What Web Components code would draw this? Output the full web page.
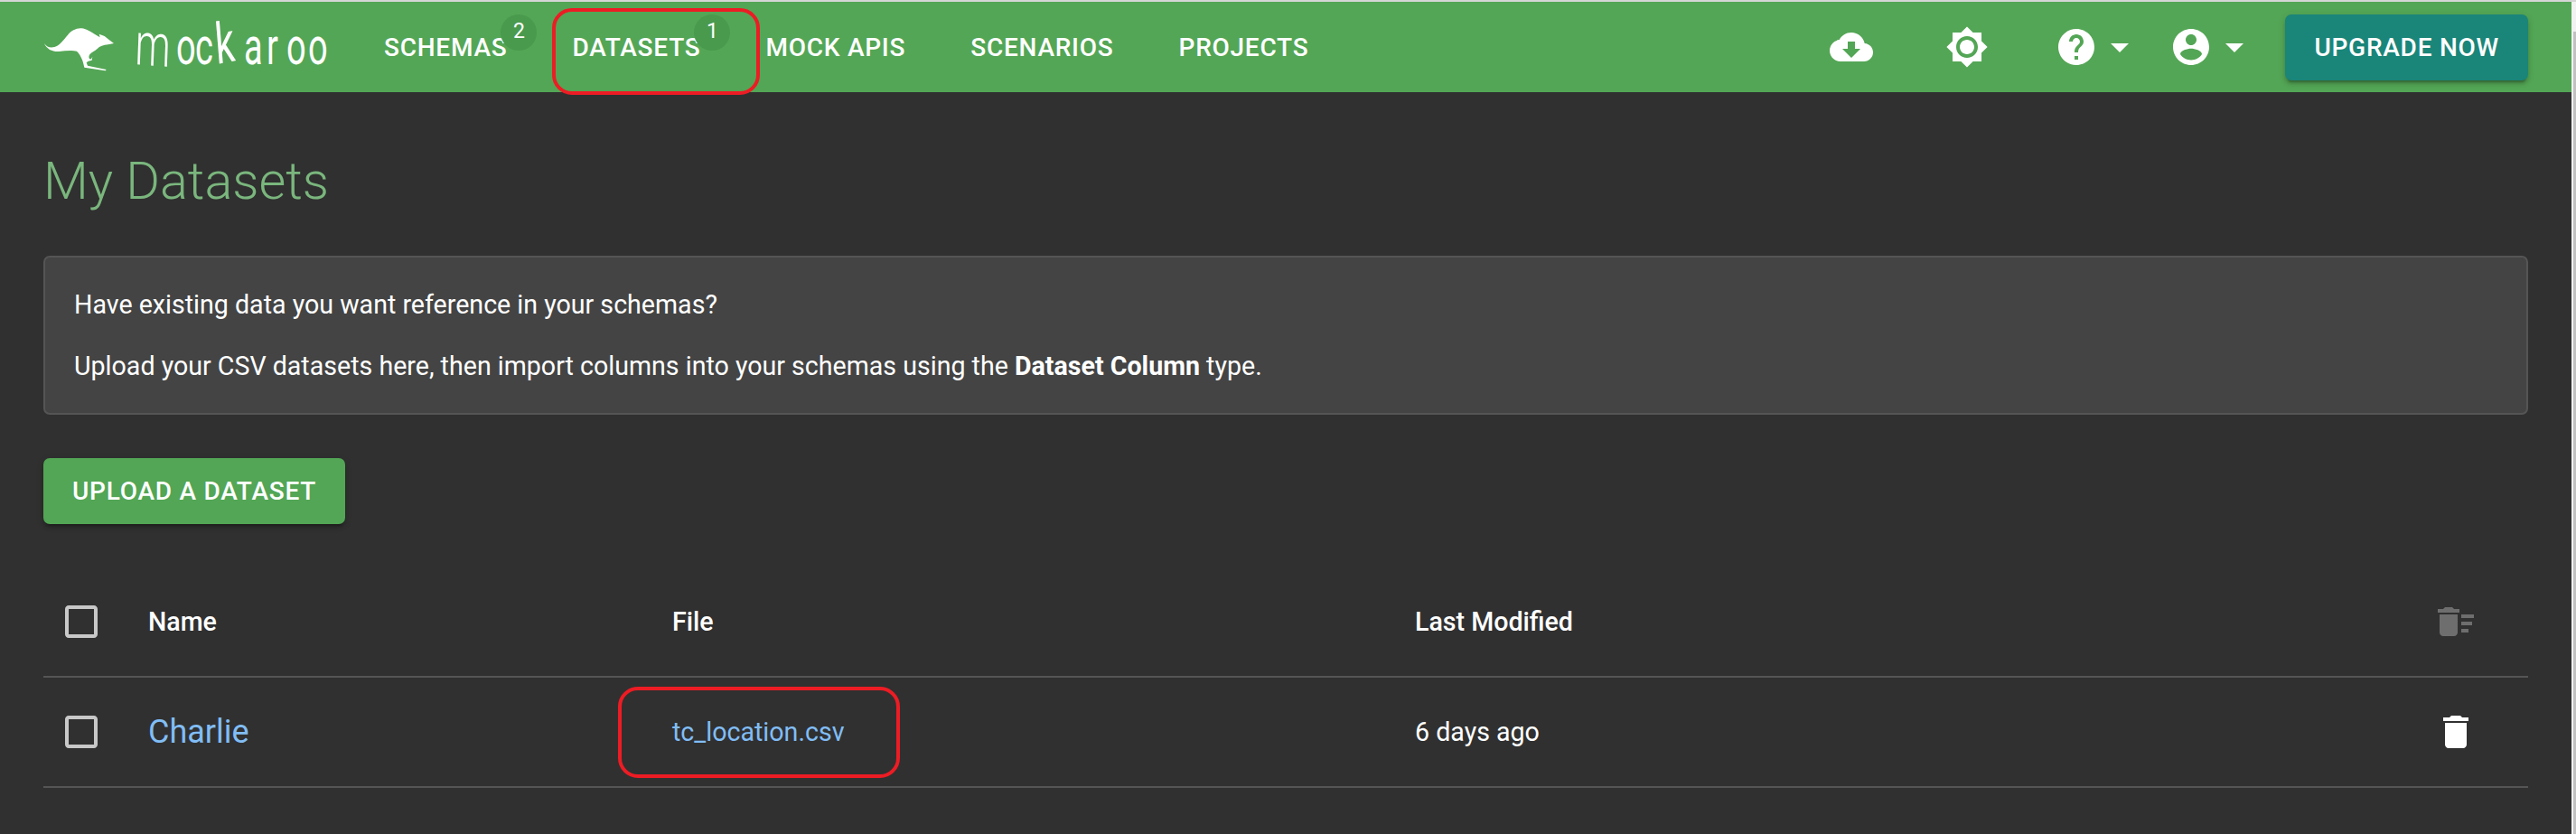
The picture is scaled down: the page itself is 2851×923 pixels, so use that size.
<!DOCTYPE html>
<html lang="en">
<head>
<meta charset="utf-8">
<title>My Datasets</title>
<style>
  html, body { margin: 0; height: 100%; background: #303030; overflow: hidden; }
  body { font: 400 28.6px/36px Roboto, "Liberation Sans", sans-serif; color: #fff; }
</style>
</head>
<body>
<mk-app>
  <mk-navbar slot="nav">
    <mk-nav-link badge="2">SCHEMAS</mk-nav-link>
    <mk-callout style="--l:-22px;--t:-26px;--w:230px;--h:96px"><mk-nav-link badge="1">DATASETS</mk-nav-link></mk-callout>
    <mk-nav-link>MOCK APIS</mk-nav-link>
    <mk-nav-link>SCENARIOS</mk-nav-link>
    <mk-nav-link>PROJECTS</mk-nav-link>
    <mk-icon slot="tools" name="cloud" style="margin-right:80px"></mk-icon>
    <mk-icon slot="tools" name="sun" style="margin-right:73px"></mk-icon>
    <mk-icon slot="tools" name="help"></mk-icon>
    <mk-icon slot="tools" name="caret" style="margin-right:31px"></mk-icon>
    <mk-icon slot="tools" name="account"></mk-icon>
    <mk-icon slot="tools" name="caret" style="margin-right:32px"></mk-icon>
    <mk-button slot="tools" color="#1a8579">UPGRADE NOW</mk-button>
  </mk-navbar>

  <mk-title>My Datasets</mk-title>

  <mk-notice>
    <p>Have existing data you want reference in your schemas?</p>
    <p>Upload your CSV datasets here, then import columns into your schemas using the <b>Dataset Column</b> type.</p>
  </mk-notice>

  <mk-button color="#52a655" style="margin-top:48px">UPLOAD A DATASET</mk-button>

  <mk-table>
    <mk-row head>
      <mk-icon slot="check" name="checkbox" color="#c8c8c8"></mk-icon>
      <span slot="name">Name</span>
      <span slot="file">File</span>
      <span slot="modified">Last Modified</span>
      <mk-icon slot="action" name="sweep" color="#6e6e6e"></mk-icon>
    </mk-row>
    <mk-row>
      <mk-icon slot="check" name="checkbox" color="#c8c8c8"></mk-icon>
      <mk-link slot="name" size="36px" style="padding-top:2px">Charlie</mk-link>
      <mk-callout slot="file" style="--l:-60px;--t:-32px;--w:312px;--h:101px"><mk-link>tc_location.csv</mk-link></mk-callout>
      <span slot="modified">6 days ago</span>
      <mk-icon slot="action" name="trash"></mk-icon>
    </mk-row>
  </mk-table>
</mk-app>

<script>
const ICONS = {
  cloud: 'M19.35 10.04C18.67 6.59 15.64 4 12 4 9.11 4 6.6 5.64 5.35 8.04 2.34 8.36 0 10.91 0 14c0 3.31 2.69 6 6 6h13c2.76 0 5-2.24 5-5 0-2.64-2.05-4.78-4.65-4.96zM17 13l-5 5-5-5h3V9h4v4h3z',
  sun: 'M20 8.69V4h-4.69L12 .69 8.69 4H4v4.69L.69 12 4 15.31V20h4.69L12 23.31 15.31 20H20v-4.69L23.31 12 20 8.69zM12 18c-3.31 0-6-2.69-6-6s2.69-6 6-6 6 2.69 6 6-2.69 6-6 6zm0-10c-2.21 0-4 1.79-4 4s1.79 4 4 4 4-1.79 4-4-1.79-4-4-4z',
  help: 'M12 2C6.48 2 2 6.48 2 12s4.48 10 10 10 10-4.48 10-10S17.52 2 12 2zm1 17h-2v-2h2v2zm2.07-7.75l-.9.92C13.45 12.9 13 13.5 13 15h-2v-.5c0-1.1.45-2.1 1.17-2.83l1.24-1.26c.37-.36.59-.86.59-1.41 0-1.1-.9-2-2-2s-2 .9-2 2H8c0-2.21 1.79-4 4-4s4 1.79 4 4c0 .88-.36 1.68-.93 2.25z',
  caret: 'M7 10l5 5 5-5z',
  account: 'M12 2C6.48 2 2 6.48 2 12s4.48 10 10 10 10-4.48 10-10S17.52 2 12 2zm0 3c1.66 0 3 1.34 3 3s-1.34 3-3 3-3-1.34-3-3 1.34-3 3-3zm0 14.2c-2.5 0-4.71-1.28-6-3.22.03-1.99 4-3.08 6-3.08 1.99 0 5.97 1.09 6 3.08-1.29 1.94-3.5 3.22-6 3.22z',
  checkbox: 'M19 5v14H5V5h14m0-2H5c-1.1 0-2 .9-2 2v14c0 1.1.9 2 2 2h14c1.1 0 2-.9 2-2V5c0-1.1-.9-2-2-2z',
  sweep: 'M15 16h4v2h-4zm0-8h7v2h-7zm0 4h6v2h-6zM3 18c0 1.1.9 2 2 2h6c1.1 0 2-.9 2-2V8H3v10zM14 5h-3l-1-1H6L5 5H2v2h12z',
  trash: 'M6 19c0 1.1.9 2 2 2h8c1.1 0 2-.9 2-2V7H6v12zM19 4h-3.5l-1-1h-5l-1 1H5v2h14V4z'
};

class MkIcon extends HTMLElement {
  connectedCallback() {
    if (this.shadowRoot) return;
    this.attachShadow({ mode: 'open' });
    const color = this.getAttribute('color') || '#fff';
    this.shadowRoot.innerHTML = `
      <style>
        :host { display: block; width: 48px; height: 48px; flex: none; }
        svg { display: block; width: 48px; height: 48px; fill: ${color}; }
      </style>
      <svg viewBox="0 0 24 24"><path d="${ICONS[this.getAttribute('name')]}"/></svg>
    `;
  }
}
customElements.define('mk-icon', MkIcon);

class MkApp extends HTMLElement {
  constructor() {
    super();
    this.attachShadow({ mode: 'open' });
    this.shadowRoot.innerHTML = `
      <style>
        :host { display: flex; height: 100vh; box-sizing: border-box; border-top: 2px solid #d6d6d6; }
        .page { flex: 1; min-width: 0; }
        .content { padding: 0 48px; }
        .scrollbar { width: 5px; box-sizing: border-box; padding: 33px 0 0 2px; background: #f1f1f1; }
        .thumb { height: 100%; background: #c1c1c1; }
      </style>
      <div class="page">
        <slot name="nav"></slot>
        <div class="content"><slot></slot></div>
      </div>
      <div class="scrollbar"><div class="thumb"></div></div>
    `;
  }
}
customElements.define('mk-app', MkApp);

class MkNavbar extends HTMLElement {
  constructor() {
    super();
    this.attachShadow({ mode: 'open' });
    this.shadowRoot.innerHTML = `
      <style>
        :host { display: flex; align-items: center; height: 100px; background: #53a655; padding: 0 48px 0 49px; }
        .logo { width: 316px; height: 60px; margin-right: 60px; flex: none; fill: #fff; overflow: visible; }
        .logo text { font: 400 38px Roboto, "Liberation Sans", sans-serif; }
        .logo .m { font-size: 44px; font-weight: 300; }
        .logo .k { font-size: 42px; }
        .links { display: flex; align-items: center; gap: 72px; padding-top: 2px; }
        .tools { display: flex; align-items: center; margin-left: auto; }
      </style>
      <svg class="logo" viewBox="0 0 316 60">
        <path transform="translate(-4 4) scale(.3333)" d="M12 66C20 78 32 82 46 78C62 74 76 54 90 38C102 24 118 15 135 16C152 17 172 32 197 46L194 35L212 42L228 55L243 66L224 70C208 71 196 76 188 84C180 92 168 96 162 104C158 112 162 120 168 118L172 110L170 122L158 125L152 130L156 140L218 153L215 157L145 146C142 130 136 108 120 92C100 88 80 92 60 93C40 94 20 86 12 66Z"/>
        <text transform="translate(0 49) scale(1 1.5)" x="100 146 167 191 221 246 268 292" rotate="3 0 0 -7 0 0 0 0"><tspan class="m">m</tspan>oc<tspan class="k">k</tspan>aroo</text>
      </svg>
      <div class="links"><slot></slot></div>
      <div class="tools"><slot name="tools"></slot></div>
    `;
  }
}
customElements.define('mk-navbar', MkNavbar);

class MkNavLink extends HTMLElement {
  connectedCallback() {
    if (this.shadowRoot) return;
    this.attachShadow({ mode: 'open' });
    const badge = this.getAttribute('badge');
    this.shadowRoot.innerHTML = `
      <style>
        :host { display: block; position: relative; font: 500 28px/36px Roboto, "Liberation Sans", sans-serif; letter-spacing: .75px; white-space: nowrap; }
        .badge {
          position: absolute; top: -19px; right: -33px; width: 40px; height: 40px; border-radius: 50%;
          background: #4a9a4e; font-size: 23px; font-weight: 400; line-height: 38px; text-align: center; letter-spacing: 0;
        }
      </style>
      <slot></slot>${badge ? `<span class="badge">${badge}</span>` : ''}
    `;
  }
}
customElements.define('mk-nav-link', MkNavLink);

class MkCallout extends HTMLElement {
  constructor() {
    super();
    this.attachShadow({ mode: 'open' });
    this.shadowRoot.innerHTML = `
      <style>
        :host { display: block; position: relative; }
        .ring {
          position: absolute; box-sizing: border-box; left: var(--l); top: var(--t); width: var(--w); height: var(--h);
          border: 4px solid #ed1c24; border-radius: 22px; pointer-events: none;
        }
      </style>
      <slot></slot><div class="ring"></div>
    `;
  }
}
customElements.define('mk-callout', MkCallout);

class MkButton extends HTMLElement {
  connectedCallback() {
    if (this.shadowRoot) return;
    this.attachShadow({ mode: 'open' });
    this.shadowRoot.innerHTML = `
      <style>
        :host {
          display: block; width: max-content; flex: none; box-sizing: border-box; height: 73px; padding: 0 32px;
          border-radius: 7px; background: ${this.getAttribute('color')};
          font: 500 28px/73px Roboto, "Liberation Sans", sans-serif; letter-spacing: .75px; color: #fff;
          box-shadow: 0 5px 2px -3px rgba(0,0,0,.2), 0 4px 4px 0 rgba(0,0,0,.14), 0 2px 9px 0 rgba(0,0,0,.12);
        }
      </style>
      <slot></slot>
    `;
  }
}
customElements.define('mk-button', MkButton);

class MkTitle extends HTMLElement {
  constructor() {
    super();
    this.attachShadow({ mode: 'open' });
    this.shadowRoot.innerHTML = `
      <style>
        :host { display: block; padding: 60px 0 44px 0; font: 300 57.6px/77px Roboto, "Liberation Sans", sans-serif; color: #7ab67d; }
      </style>
      <slot></slot>
    `;
  }
}
customElements.define('mk-title', MkTitle);

class MkNotice extends HTMLElement {
  constructor() {
    super();
    this.attachShadow({ mode: 'open' });
    this.shadowRoot.innerHTML = `
      <style>
        :host { display: block; box-sizing: border-box; height: 176px; padding: 34px 32px; background: #444; border: 2px solid #555; border-radius: 7px; }
        ::slotted(p) { margin: 0 0 32px; }
        ::slotted(p:last-child) { margin-bottom: 0; }
      </style>
      <slot></slot>
    `;
  }
}
customElements.define('mk-notice', MkNotice);

class MkTable extends HTMLElement {
  constructor() {
    super();
    this.attachShadow({ mode: 'open' });
    this.shadowRoot.innerHTML = `
      <style>
        :host { display: block; margin-top: 48px; }
      </style>
      <slot></slot>
    `;
  }
}
customElements.define('mk-table', MkTable);

class MkRow extends HTMLElement {
  constructor() {
    super();
    this.attachShadow({ mode: 'open' });
    this.shadowRoot.innerHTML = `
      <style>
        :host {
          display: grid; grid-template-columns: 116px 580px 822px 1fr 104px; align-items: center;
          box-sizing: border-box; height: 122px; border-bottom: 2px solid #555;
        }
        :host([head]) { font-weight: 500; }
        .check { padding-left: 18px; }
      </style>
      <div class="check"><slot name="check"></slot></div>
      <div><slot name="name"></slot></div>
      <div><slot name="file"></slot></div>
      <div><slot name="modified"></slot></div>
      <div><slot name="action"></slot></div>
    `;
  }
}
customElements.define('mk-row', MkRow);

class MkLink extends HTMLElement {
  connectedCallback() {
    if (this.shadowRoot) return;
    this.attachShadow({ mode: 'open' });
    const size = this.getAttribute('size') || '28.6px';
    this.shadowRoot.innerHTML = `
      <style>
        :host { display: inline-block; font-size: ${size}; color: #81bdf5; }
      </style>
      <slot></slot>
    `;
  }
}
customElements.define('mk-link', MkLink);
</script>
</body>
</html>
